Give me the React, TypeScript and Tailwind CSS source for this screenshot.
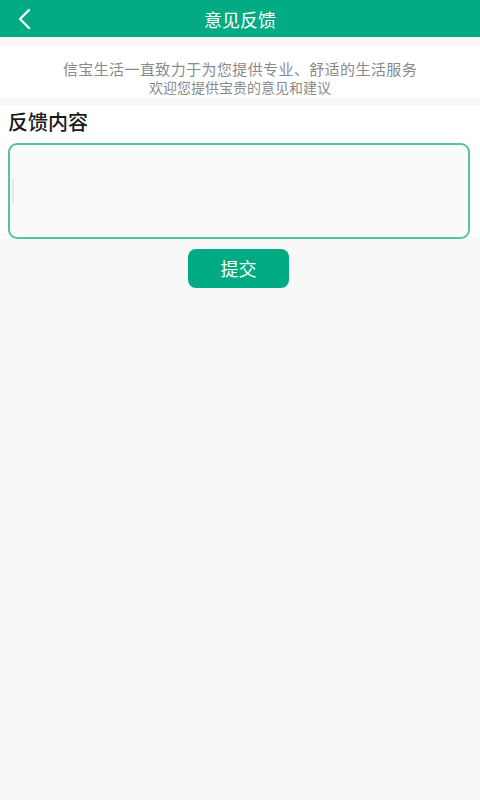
import { useState } from "react";

// Feedback page: green title bar, intro note, one textarea and a submit button.

const FONT = { fontFamily: '"Noto Sans CJK SC", "Noto Sans", sans-serif' };

function BackIcon() {
  return (
    <svg width="16" height="22" viewBox="0 0 16 22" fill="none">
      <path d="M13 2 L4 11 L13 20" stroke="white" strokeWidth="2.4" strokeLinecap="round" strokeLinejoin="round" />
    </svg>
  );
}

export default function App() {
  const [text, setText] = useState("");

  return (
    <div className="min-h-[800px] w-[480px] bg-[#f8f8f8]" style={FONT}>
      <header className="relative flex h-[37px] items-center justify-center bg-[#02ab83]">
        <button className="absolute left-[16px] top-[8px]" aria-label="返回">
          <BackIcon />
        </button>
        <h1 className="text-[18px] leading-none text-white">意见反馈</h1>
      </header>

      <div className="mt-[10px] flex h-[50px] flex-col items-center bg-white pt-[12px] text-[#8a8a8a]">
        <p className="text-[15px] leading-[19px] tracking-[0.4px]">信宝生活一直致力于为您提供专业、舒适的生活服务</p>
        <p className="text-[14px] leading-[19px]">欢迎您提供宝贵的意见和建议</p>
      </div>

      <section className="mt-[8px] bg-white px-[8px] pt-[2px]">
        <h2 className="text-[20px] font-medium leading-[30px] text-[#1a1a1a]">反馈内容</h2>
        <div className="relative mt-[6px]">
          <textarea
            value={text}
            onChange={(e) => setText(e.target.value)}
            className="block h-[96px] w-[462px] resize-none rounded-[9px] border-2 border-[#52c4a4] bg-[#fafafa] px-[6px] py-[33px] text-[15px] text-[#333] outline-none"
          />
          {text === "" && (
            <span className="pointer-events-none absolute left-[4px] top-[35px] h-[25px] w-[2px] bg-[#e6e6e6]" />
          )}
        </div>
      </section>

      <div className="flex justify-center pt-[10px] pr-[3px]">
        <button className="h-[39px] w-[101px] rounded-[8px] bg-[#02ab83] text-[18px] text-white">提交</button>
      </div>
    </div>
  );
}
